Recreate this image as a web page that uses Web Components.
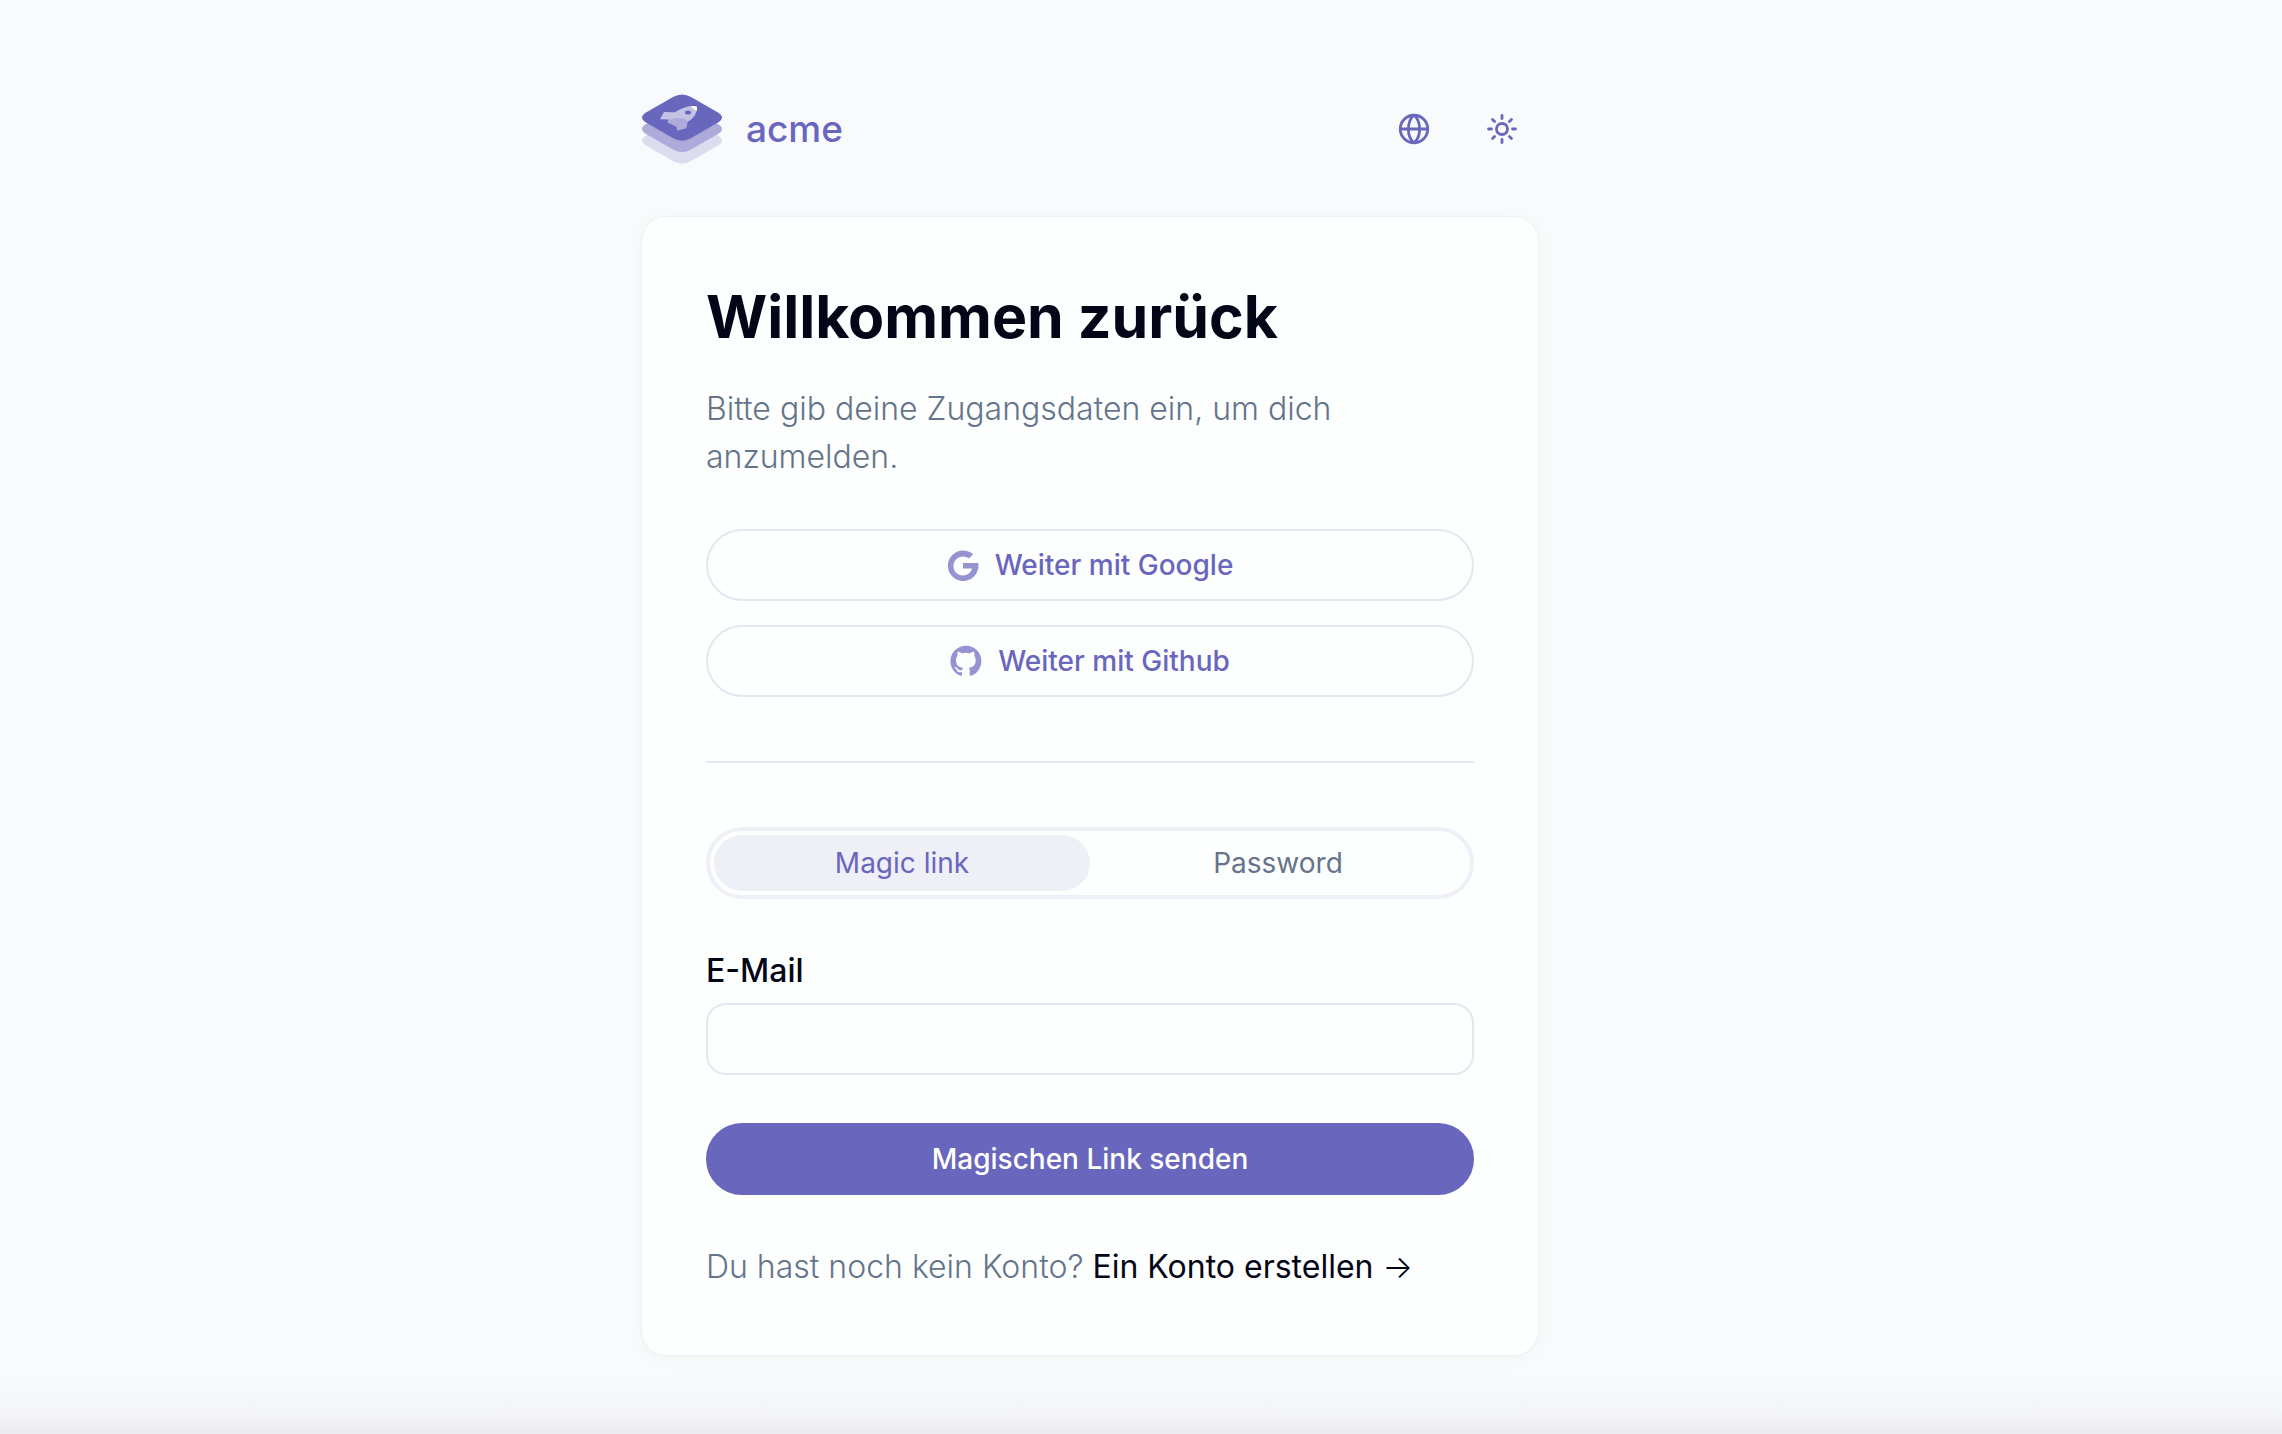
<!DOCTYPE html>
<html lang="de">
<head>
<meta charset="utf-8">
<title>acme</title>
<style>
  :root {
    --primary: #6966bd;
    --icon-soft: #9693d2;
    --tint: #efeff7;
    --border: #e2e8f0;
    --ink: #020617;
    --muted: #64748b;
  }
  html, body { margin: 0; min-height: 100%; }
  body {
    background: #f9fafc;
    color: var(--ink);
    font-family: Inter, "Open Sans", sans-serif;
  }
</style>
</head>
<body>
<login-page></login-page>

<template id="login-page">
  <style>
    :host {
      display: flex;
      justify-content: center;
      box-sizing: border-box;
      min-height: 100vh;
      padding: 93px 102px 79px 0;
      background: linear-gradient(to top, #ececee, #f4f5f7 22px, #f9fafc 64px);
    }
    main { width: 100%; max-width: 896px; }
    acme-card { margin-top: 52px; }
    h1 { margin: 0; font-size: 59px; line-height: 72px; font-weight: 700; }
    p { margin: 0; font-size: 32px; line-height: 48px; font-weight: 300; color: var(--muted); }
    .intro { margin-top: 32px; }
    .providers { display: flex; flex-direction: column; gap: 24px; margin-top: 48px; }
    .providers svg { fill: var(--icon-soft); }
    hr { margin: 64px 0; border: 0; border-top: 2px solid var(--border); }
    form { display: flex; flex-direction: column; gap: 48px; margin: 48px 0; }
    a { color: var(--ink); font-weight: 400; text-decoration: none; }
    .arrow { font-weight: 300; }
  </style>
  <main>
    <acme-header></acme-header>
    <acme-card>
      <h1>Willkommen zurück</h1>
      <p class="intro">Bitte gib deine Zugangsdaten ein, um dich anzumelden.</p>
      <div class="providers">
        <pill-button variant="outline">
          <svg slot="icon" width="32" height="32" viewBox="0 0 32 32"><path d="M26.2 5.2A15.3 15.3 0 1 0 31.2 14H16v5.600h9.100A9.500 9.500 0 1 1 21.900 9.600Z"/></svg>
          Weiter mit Google
        </pill-button>
        <pill-button variant="outline">
          <svg slot="icon" width="32" height="32" viewBox="0 0 24 24"><path d="M12 .5C5.4.5.3 5.7.3 12.1c0 5.100 3.300 9.500 7.900 11 .6.1.8-.3.8-.6v-2.200c-3.200.7-3.900-1.400-3.900-1.400-.5-1.300-1.300-1.700-1.300-1.700-1.100-.7.1-.7.1-.7 1.200.1 1.800 1.200 1.800 1.200 1 1.800 2.700 1.300 3.400 1 .1-.8.4-1.300.7-1.600-2.600-.3-5.300-1.300-5.300-5.800 0-1.300.5-2.300 1.200-3.100-.1-.3-.5-1.500.1-3.100 0 0 1-.3 3.200 1.200a11 11 0 0 1 5.800 0c2.200-1.500 3.200-1.200 3.200-1.200.6 1.600.2 2.800.1 3.100.7.8 1.200 1.900 1.200 3.100 0 4.500-2.700 5.500-5.300 5.800.4.400.8 1.100.8 2.200v3.200c0 .3.200.7.8.600 4.700-1.600 7.900-5.900 7.900-11C23.700 5.700 18.600.5 12 .5Z"/></svg>
          Weiter mit Github
        </pill-button>
      </div>
      <hr>
      <login-tabs></login-tabs>
      <form>
        <text-field label="E-Mail" type="email"></text-field>
        <pill-button variant="solid">Magischen Link senden</pill-button>
      </form>
      <p>Du hast noch kein Konto? <a href="#">Ein Konto erstellen <span class="arrow">→</span></a></p>
    </acme-card>
  </main>
</template>

<template id="acme-header">
  <style>
    :host { display: block; }
    header { display: flex; align-items: center; justify-content: space-between; height: 72px; }
    .brand { display: flex; align-items: center; gap: 24px; color: var(--primary); font-size: 37px; line-height: 48px; font-weight: 500; text-decoration: none; }
    nav { display: flex; gap: 16px; }
    button { display: flex; align-items: center; justify-content: center; width: 72px; height: 72px; padding: 0; border: 0; background: none; color: var(--primary); }
    svg { display: block; }
  </style>
  <header>
    <a class="brand" href="#">
      <svg width="80" height="70" viewBox="0 0 80 70" fill="#6966bd" aria-hidden="true">
        <path opacity=".2" d="M4 41.500 31 26Q40 21 49 26L76 41.500Q84 46.500 76 51.500L49 67Q40 72 31 67L4 51.500Q-4 46.500 4 41.500Z"/>
        <path fill="#aeabdb" d="M4 30 31 14.500Q40 9.500 49 14.500L76 30Q84 35 76 40L49 55.500Q40 60.500 31 55.500L4 40Q-4 35 4 30Z"/>
        <path fill="#9d9ad3" opacity=".45" d="M12 34.800 31 24Q40 19 49 24L68 34.800 49 45.500Q40 50 31 45.500Z"/>
        <path d="M4 18.500 31 3Q40-2 49 3L76 18.500Q84 23.500 76 28.500L49 44Q40 49 31 44L4 28.500Q-4 23.500 4 18.500Z"/>
        <path fill="#c3c1e4" d="M55 12.700Q50 11.500 45 12.700 38 14.500 33 18.200L22 18 18 25.200 27 25.600 25.500 28 35 33 44 28.500Q55 24 55 12.700Z"/>
        <path fill="#aeabdb" d="M25.500 28.500Q29 23.500 36 24 42 24 45.800 27L44.300 34.300 35 36.700 34.700 32.500Z"/>
        <path fill="#fff" d="M48.500 12.300Q52 11.600 55 12.700 55.300 15 54.500 17.200Z"/>
        <ellipse cx="46" cy="18.400" rx="3" ry="2"/>
      </svg>
      acme
    </a>
    <nav>
      <button type="button" aria-label="Sprache">
        <svg width="32" height="32" viewBox="0 0 32 32" fill="none" stroke="currentColor" stroke-width="2.800"><circle cx="16" cy="16" r="13.750"/><path d="M2 16H30M16 2C8.500 8.500 8.500 23.500 16 30M16 2C23.500 8.500 23.500 23.500 16 30"/></svg>
      </button>
      <button type="button" aria-label="Farbschema">
        <svg width="32" height="32" viewBox="0 0 32 32" fill="none" stroke="currentColor" stroke-width="2.800" stroke-linecap="round"><circle cx="16" cy="16" r="5.500"/><path d="M16 2.500V5.500M16 26.500V29.500M2.500 16H5.500M26.500 16H29.500M6.500 6.500 8.600 8.600M23.400 23.400 25.500 25.500M6.500 25.500 8.600 23.400M23.400 8.600 25.500 6.500"/></svg>
      </button>
    </nav>
  </header>
</template>

<template id="acme-card">
  <style>
    :host {
      display: block;
      padding: 64px;
      border-radius: 24px;
      background: #fdfefe;
      box-shadow: 0 0 2px rgba(0, 0, 0, .1), 0 2px 24px rgba(0, 0, 0, .03);
    }
  </style>
  <slot></slot>
</template>

<template id="pill-button">
  <style>
    :host { display: block; }
    button {
      display: flex; align-items: center; justify-content: center; gap: 16px;
      box-sizing: border-box; width: 100%; height: 72px; padding: 0 32px;
      border: 2px solid var(--primary); border-radius: 36px;
      background: var(--primary); color: #fff;
      font: 500 28px/40px Inter, "Open Sans", sans-serif;
    }
    :host([variant="outline"]) button { border-color: var(--border); background: none; color: var(--primary); }
    ::slotted(svg) { display: block; flex: none; }
  </style>
  <button type="button"><slot name="icon"></slot><span><slot></slot></span></button>
</template>

<template id="login-tabs">
  <style>
    :host { display: block; }
    div {
      display: grid; grid-template-columns: 1fr 1fr;
      padding: 4px; border: 4px solid var(--tint); border-radius: 36px;
    }
    button {
      height: 56px; padding: 0; border: 0; border-radius: 28px;
      background: none; color: var(--muted);
      font: 400 28px/40px Inter, "Open Sans", sans-serif;
    }
    button[aria-selected="true"] { background: var(--tint); color: var(--primary); }
  </style>
  <div role="tablist">
    <button type="button" role="tab" aria-selected="true">Magic link</button>
    <button type="button" role="tab" aria-selected="false">Password</button>
  </div>
</template>

<template id="text-field">
  <style>
    :host { display: flex; flex-direction: column; gap: 8px; }
    label { font-size: 32px; line-height: 48px; font-weight: 500; }
    input {
      box-sizing: border-box; width: 100%; height: 72px; padding: 0 24px;
      border: 2px solid var(--border); border-radius: 20px; background: none;
      color: var(--ink); font: 400 28px/40px Inter, "Open Sans", sans-serif;
    }
  </style>
  <label for="field"></label>
  <input id="field">
</template>

<script>
  class TemplateElement extends HTMLElement {
    constructor() {
      super();
      const template = document.getElementById(this.localName);
      this.attachShadow({ mode: "open" }).append(template.content.cloneNode(true));
    }
  }

  class AcmeHeader extends TemplateElement {}
  class AcmeCard extends TemplateElement {}
  class PillButton extends TemplateElement {}

  class LoginTabs extends TemplateElement {
    connectedCallback() {
      const tabs = [...this.shadowRoot.querySelectorAll("button")];
      for (const tab of tabs) {
        tab.onclick = () => tabs.forEach(t => t.setAttribute("aria-selected", t === tab));
      }
    }
  }

  class TextField extends TemplateElement {
    connectedCallback() {
      this.shadowRoot.querySelector("label").textContent = this.getAttribute("label");
      this.shadowRoot.querySelector("input").type = this.getAttribute("type") || "text";
    }
  }

  class LoginPage extends TemplateElement {}

  customElements.define("acme-header", AcmeHeader);
  customElements.define("acme-card", AcmeCard);
  customElements.define("pill-button", PillButton);
  customElements.define("login-tabs", LoginTabs);
  customElements.define("text-field", TextField);
  customElements.define("login-page", LoginPage);
</script>
</body>
</html>
